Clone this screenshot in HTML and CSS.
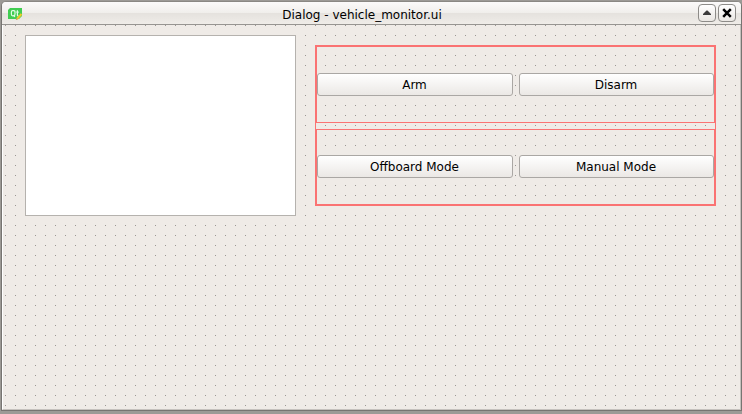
FILE: index.html
```
<!DOCTYPE html>
<html lang="en">
<head>
<meta charset="utf-8">
<title>Dialog - vehicle_monitor.ui</title>
<link rel="stylesheet" href="styles.css">
</head>
<body>
<div class="window">
  <header class="titlebar">
    <svg class="app-icon" width="15" height="12" viewBox="0 0 15 12">
      <path fill="#41cd52" d="M2 0H14V8L11 11H0V2Z"/>
      <g fill="none" stroke="#e4fbe7" stroke-width="1.2">
        <path d="M4.600 2.600h1.200q1.200 0 1.200 1.400v2q0 1.800-1.200 1.800H4.600q-1.200 0-1.200-1.800V4q0-1.400 1.200-1.400ZM5.600 7l1.300 2M9.400 2.200v5.100q0 .7 1.100.6M8.300 4.200h2.400"/>
      </g>
      <path stroke="#f2c928" stroke-width="2" d="M9 11l4.500-5"/>
      <path stroke="#c8a35a" stroke-width="1.500" d="M8 11.500l1.500-1"/>
    </svg>
    <h1 class="title">Dialog - vehicle_monitor.ui</h1>
    <div class="controls">
      <button class="control" aria-label="Shade"><svg width="16" height="16" viewBox="0 0 16 16"><path fill="#3c3c3c" d="M4 10V9L7.500 5.500h1L12 9v1Z"/></svg></button>
      <button class="control" aria-label="Close"><svg width="16" height="16" viewBox="0 0 16 16"><path stroke="#000" stroke-width="2.500" d="M4.200 4.200l7.600 7.600M11.800 4.200l-7.600 7.600"/></svg></button>
    </div>
  </header>
  <main class="form">
    <div class="view"></div>
    <div class="layout">
      <div class="row row-first">
        <button class="push">Arm</button>
        <button class="push">Disarm</button>
      </div>
      <div class="row row-last">
        <button class="push">Offboard Mode</button>
        <button class="push">Manual Mode</button>
      </div>
    </div>
  </main>
</div>
</body>
</html>
```
FILE: styles.css
```
* { box-sizing: border-box; }
body {
  margin: 0;
  height: 414px;
  padding: 1px 0 3px 1px;
  overflow: hidden;
  background: #9c9a96;
  font: 12px "DejaVu Sans", sans-serif;
  color: #000;
}
.window {
  width: 741px;
  height: 410px;
  border: 1px solid #777572;
  border-top-color: #8a8884;
  border-radius: 5px 5px 0 0;
  overflow: hidden;
  background: #efebe7;
}
.titlebar {
  display: grid;
  grid-template-columns: 41px 1fr 41px;
  height: 23px;
  border-bottom: 1px solid #979592;
  background: linear-gradient(#fbfafa 0, #f0eeeb 50%, #e5e2de 52%, #efece8 100%);
}
.app-icon { margin: 6px 0 0 6px; }
.title {
  margin: 0;
  padding: 6px 19px 0 0;
  font-size: 12px;
  font-weight: normal;
  line-height: 14px;
  text-align: center;
}
.controls { display: flex; gap: 2px; padding-top: 2px; margin-left: -2px; }
.control {
  flex: none;
  width: 18px;
  height: 18px;
  padding: 0;
  border: 1px solid #8d8b88;
  border-radius: 4px;
  background: linear-gradient(#fff, #eae7e3);
}
.control svg { display: block; }
.form {
  display: flex;
  align-items: flex-start;
  gap: 19px;
  height: 385px;
  padding: 10px 0 0 22px;
  border-left: 1px solid #fff;
  border-right: 1px solid #c5c1bd;
  border-bottom: 1px solid #c5c1bd;
  background: conic-gradient(from 270deg at 1px 1px, #9a9793 90deg, transparent 0) 2px 0 / 10px 10px #efebe7;
}
.view {
  width: 271px;
  height: 181px;
  border: 1px solid #b5b2ae;
  background: #fff;
}
.layout {
  display: flex;
  flex-direction: column;
  gap: 6px;
  width: 401px;
  height: 161px;
  margin-top: 10px;
  border: 1px solid #fa7373;
}
.row {
  display: grid;
  grid-template-columns: 196px 195px;
  column-gap: 6px;
  border: 1px solid #fa7373;
}
.row-first { height: 77px; padding-top: 26px; }
.row-last { height: 76px; padding-top: 25px; }
.push {
  height: 23px;
  padding: 0 1px 0 0;
  border: 1px solid #aaa7a4;
  border-radius: 3px;
  background: linear-gradient(#fff, #ebe8e5);
  font: inherit;
  color: #000;
}
```
